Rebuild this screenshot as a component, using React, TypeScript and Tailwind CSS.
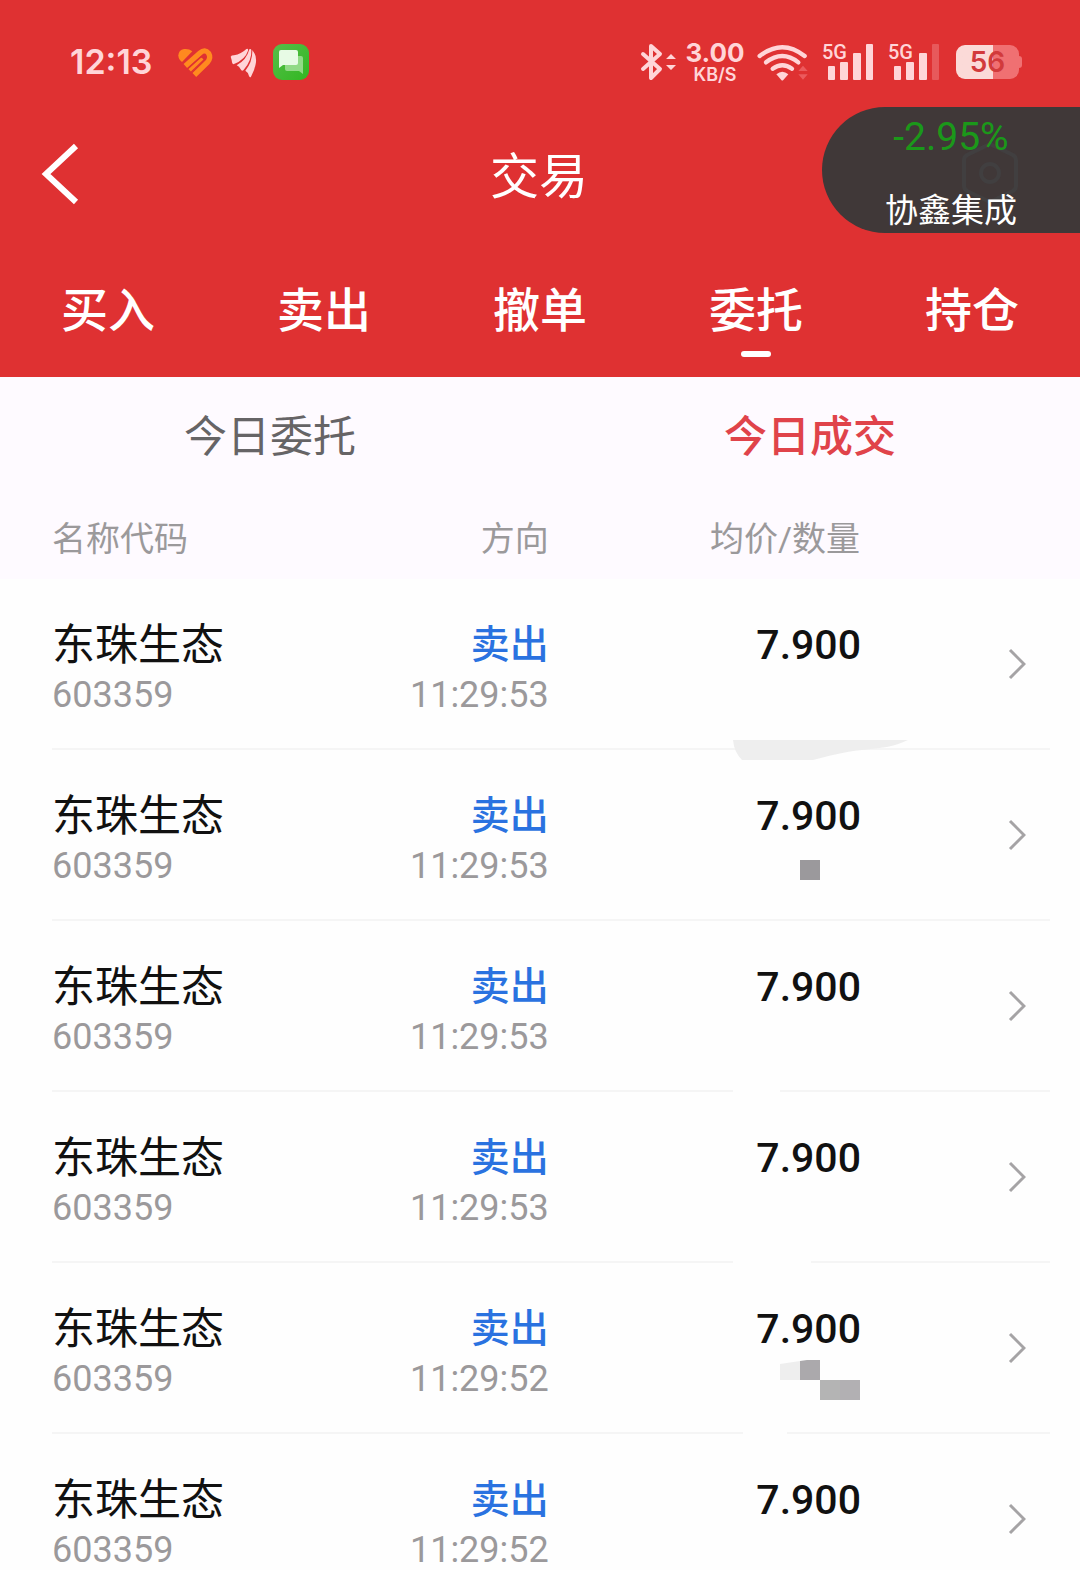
import type { ReactNode } from "react";

type Deal = {
  name: string;
  code: string;
  side: string;
  time: string;
  price: string;
  mask?: ReactNode;
};

const tabs = ["买入", "卖出", "撤单", "委托", "持仓"];
const subTabs = ["今日委托", "今日成交"];

const deal = { name: "东珠生态", code: "603359", side: "卖出", price: "7.900" };

// the quantities are scrubbed out, these are what the eraser left behind
const deals: Deal[] = [
  {
    ...deal,
    time: "11:29:53",
    mask: (
      <path
        d="M182 161H357C343 168 330 169 311 171C292 173 278 177 262 181H191Q183 173 182 161Z"
        fill="#eeeeee"
      />
    ),
  },
  {
    ...deal,
    time: "11:29:53",
    mask: <rect x="249" y="110" width="20" height="20" fill="#9b999c" />,
  },
  {
    ...deal,
    time: "11:29:53",
    mask: <rect x="182" y="168" width="47" height="4" fill="#fefefe" />,
  },
  {
    ...deal,
    time: "11:29:53",
    mask: <rect x="182" y="168" width="78" height="4" fill="#fefefe" />,
  },
  {
    ...deal,
    time: "11:29:52",
    mask: (
      <>
        <path d="M229 101L249 98V117H229Z" fill="#eeeeee" />
        <path d="M249 98L256 97H269V117H249Z" fill="#aba9ac" />
        <rect x="269" y="117" width="20" height="20" fill="#b4b4b4" />
        <rect x="289" y="117" width="20" height="20" fill="#b2b0b3" />
        <rect x="192" y="168" width="44" height="4" fill="#fefefe" />
      </>
    ),
  },
  { ...deal, time: "11:29:52" },
];

function Signal({ bars }: { bars: number }) {
  return (
    <div className="relative h-10 w-[52px]">
      <span className="absolute top-0 left-0 text-[20px] leading-5 font-medium">
        5G
      </span>
      <svg viewBox="0 0 52 40" className="h-10 w-[52px]" fill="#ffd5d8">
        <rect x="6" y="24" width="7" height="14" rx="1" />
        <rect x="18" y="20" width="8" height="18" rx="1" />
        <rect x="31" y="11" width="8" height="27" rx="1" />
        <rect
          x="44"
          y="2"
          width="7"
          height="36"
          rx="1"
          opacity={bars > 3 ? 1 : 0.25}
        />
      </svg>
    </div>
  );
}

function StatusBar() {
  return (
    <div className="flex h-[107px] items-center justify-between pt-[17px] pr-[58px] pl-[70px] text-[#ffd5d8]">
      <div className="flex items-center">
        <span className="w-[102px] font-[Inter] text-[34px] leading-10 font-semibold">
          12:13
        </span>
        <svg viewBox="0 0 138 132" className="h-11 w-[46px]">
          <path
            d="M30 66Q19 58 19 46Q20 30 36 27Q50 25 61 34Z"
            fill="#ff8a1f"
          />
          <path
            d="M40 78L84 39Q99 26 110 40Q118 54 106 67L67 105"
            fill="none"
            stroke="#ff8a1f"
            strokeWidth="16"
          />
          <path
            d="M54 92L92 56"
            fill="none"
            stroke="#ff8a1f"
            strokeWidth="14"
          />
          <path
            d="M46 87L86 52Q93 47 97 52Q100 56 95 61L58 96"
            fill="none"
            stroke="#df3132"
            strokeWidth="4"
          />
        </svg>
        <svg
          viewBox="0 0 120 132"
          className="ml-[6px] h-11 w-10"
          fill="#ffd5d8"
        >
          <path d="M20 50Q22 46 30 46Q52 42 67 27Q74 24 72 32Q64 58 30 72Q25 74 24 67Q23 58 20 50Z" />
          <path d="M38 76Q68 60 76 28Q80 25 82 30Q84 62 58 91Q53 95 50 88Q46 79 38 76Z" />
          <path d="M64 92Q86 66 85 30Q100 48 95 72Q92 90 81 110Q78 114 75 108Q72 96 64 92Z" />
        </svg>
        <svg viewBox="0 0 36 36" className="ml-[9px] size-9">
          <defs>
            <linearGradient id="chat" x1="0" y1="0" x2="1" y2="1">
              <stop offset="0" stopColor="#58bd4a" />
              <stop offset="1" stopColor="#31b821" />
            </linearGradient>
          </defs>
          <rect width="36" height="36" rx="9" fill="url(#chat)" />
          <path
            d="M14 12H28Q30 12 30 14V30L26 27H14Q12 27 12 25V14Q12 12 14 12Z"
            fill="#91da86"
          />
          <path
            d="M8 6H23Q25 6 25 8V19Q25 21 23 21H10L6 24V8Q6 6 8 6Z"
            fill="#e7fbe5"
          />
        </svg>
      </div>

      <div className="flex items-center">
        <svg
          viewBox="0 0 36 38"
          className="h-[38px] w-9"
          fill="none"
          stroke="#ffd5d8"
          strokeWidth="3"
          strokeLinecap="round"
          strokeLinejoin="round"
        >
          <path d="M3 11L20 26L11 35V3L20 11L3 26" strokeWidth="4" />
          <path
            d="M26 16L31 11L36 16ZM26 22L31 27L36 22Z"
            fill="#ffd5d8"
            stroke="none"
          />
        </svg>
        <div className="ml-2 w-[62px] text-center font-[Inter] font-bold">
          <p className="text-[26px] leading-[26px]">3.00</p>
          <p className="text-[18px] leading-[18px] font-semibold">KB/S</p>
        </div>
        <svg
          viewBox="0 0 198 150"
          className="ml-1 h-[50px] w-[66px]"
          fill="none"
          stroke="#ffd5d8"
          strokeWidth="13"
          strokeLinecap="round"
        >
          <path d="M29 57Q97 4 164 57" />
          <path d="M48 76Q97 38 145 76" />
          <path d="M68 95Q97 74 126 95" />
          <path
            d="M79 112Q97 96 115 112L100 129Q97 132 94 129Z"
            fill="#ffd5d8"
            stroke="none"
          />
          <path
            d="M145 102L159 86L173 102ZM145 112L159 128L173 112Z"
            fill="#ec5a5d"
            stroke="none"
          />
        </svg>
        <div className="ml-[6px] flex gap-[14px]">
          <Signal bars={4} />
          <Signal bars={3} />
        </div>
        <div className="ml-4 flex items-center">
          <div className="flex h-[34px] w-[63px] items-center justify-center rounded-[9px] bg-linear-to-r from-[#fbdad8] from-58% to-[#f07072] to-58% font-[Inter] text-[28px] leading-8 font-semibold text-[#d23a3c]">
            56
          </div>
          <div className="h-3 w-[3px] rounded-r-sm bg-[#f07072]" />
        </div>
      </div>
    </div>
  );
}

function QuoteBubble() {
  return (
    <aside className="absolute top-[107px] right-0 h-[126px] w-[258px] rounded-l-full bg-[#403838] text-center">
      <svg
        viewBox="0 0 58 64"
        className="absolute top-[34px] right-[61px] h-16 w-[58px]"
        fill="none"
        stroke="#413f40"
        strokeWidth="4"
        strokeLinejoin="round"
      >
        <path d="M29 3L52 14Q55 16 55 19V45Q55 48 52 50L29 61L6 50Q3 48 3 45V19Q3 16 6 14Z" />
        <circle cx="29" cy="32" r="9" />
      </svg>
      <p className="relative pt-2 text-[39px] leading-[44px] text-[#1b981a]">
        -2.95%
      </p>
      <p className="relative pt-[30px] text-[33px] leading-[44px] text-white">
        协鑫集成
      </p>
    </aside>
  );
}

function DealRow({ item }: { item: Deal }) {
  const cell = "h-[171px] border-b-2 border-[#f5f5f5] pt-10";
  return (
    <tr>
      <td className="p-0 pl-[52px]">
        <div className={cell}>
          <p className="text-[43px] leading-[52px] text-[#111111]">
            {item.name}
          </p>
          <p className="text-[36px] leading-[48px] text-[#9b999b]">
            {item.code}
          </p>
        </div>
      </td>
      <td className="p-0 text-right">
        <div className={cell}>
          <p className="pr-[2px] text-[39px] leading-[52px] font-medium text-[#2a72e0]">
            {item.side}
          </p>
          <p className="pr-[2px] text-[36px] leading-[48px] text-[#9b999b]">
            {item.time}
          </p>
        </div>
      </td>
      <td className="relative p-0 text-right">
        <div className={cell}>
          <p className="pr-[3px] text-[41px] leading-[52px] font-medium text-[#111111]">
            {item.price}
          </p>
        </div>
        {item.mask && (
          <svg
            viewBox="0 0 313 171"
            className="absolute top-0 right-0 h-[171px] w-[313px] overflow-visible"
          >
            {item.mask}
          </svg>
        )}
      </td>
      <td className="p-0 pr-[30px]">
        <div className="flex h-[171px] items-center justify-end border-b-2 border-[#f5f5f5] pr-6">
          <svg
            viewBox="0 0 18 32"
            className="h-8 w-[18px]"
            fill="none"
            stroke="#a5a3a5"
            strokeWidth="3"
          >
            <path d="M2 2L16 16L2 30" />
          </svg>
        </div>
      </td>
    </tr>
  );
}

export default function App() {
  return (
    <div className="h-screen overflow-hidden bg-[#fefefe] font-[Roboto,'Noto_Sans_CJK_SC',sans-serif]">
      <header className="relative bg-[#df3132] text-white">
        <StatusBar />
        <div className="grid h-[134px] grid-cols-3 items-center pl-10">
          <button type="button" aria-label="返回" className="w-10">
            <svg
              viewBox="0 0 40 62"
              className="h-[62px] w-10"
              fill="none"
              stroke="#ffffff"
              strokeWidth="6"
            >
              <path d="M36 3L6 31L36 59" />
            </svg>
          </button>
          <h1 className="pt-2 pr-[42px] text-center text-[49px] leading-[72px]">
            交易
          </h1>
        </div>
        <nav className="grid grid-cols-5 pt-[34px] pb-5">
          {tabs.map((tab) => (
            <button
              key={tab}
              type="button"
              className="flex flex-col items-center gap-1 text-[47px] leading-[72px] font-medium"
            >
              {tab}
              {tab === "委托" && (
                <span className="h-[6px] w-[30px] rounded-full bg-white" />
              )}
            </button>
          ))}
        </nav>
        <QuoteBubble />
      </header>

      <div className="grid h-[116px] grid-cols-2 bg-[#fefaff] pt-1 text-[43px]">
        {subTabs.map((tab) => (
          <button
            key={tab}
            type="button"
            className={
              tab === "今日成交"
                ? "font-medium text-[#e0434a]"
                : "text-[#666466]"
            }
          >
            {tab}
          </button>
        ))}
      </div>

      <table className="w-full table-fixed border-collapse">
        <thead className="bg-[#fefaff] text-[34px] text-[#9b999b]">
          <tr className="h-[86px]">
            <th className="w-[27%] p-0 pt-[6px] pl-[52px] text-left font-normal">
              名称代码
            </th>
            <th className="w-[24%] p-0 pt-[6px] pr-[2px] text-right font-normal">
              方向
            </th>
            <th className="w-[29%] p-0 pt-[6px] pr-1 text-right font-normal">
              均价/数量
            </th>
            <th className="w-[20%] p-0" />
          </tr>
        </thead>
        <tbody>
          {deals.map((item, i) => (
            <DealRow key={i} item={item} />
          ))}
        </tbody>
      </table>
    </div>
  );
}
